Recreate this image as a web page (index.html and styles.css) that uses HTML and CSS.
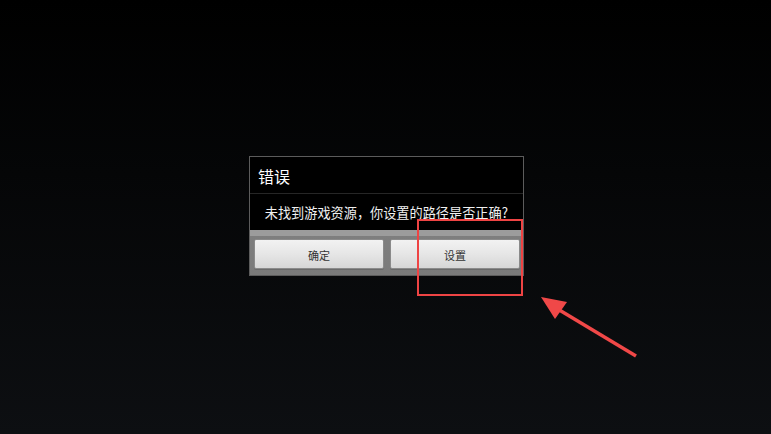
FILE: index.html
```html
<!DOCTYPE html>
<html lang="zh">
<head>
<meta charset="utf-8">
<link rel="stylesheet" href="styles.css">
</head>
<body>
<div class="screen">
  <div class="dialog">
    <div class="title">错误</div>
    <div class="message"><span class="msg-text">未找到游戏资源，你设置的路径是否正确?</span></div>
    <div class="buttons">
      <div class="btn">确定</div>
      <div class="btn">设置</div>
    </div>
  </div>
  <div class="highlight"></div>
  <svg class="arrow" width="771" height="434" viewBox="0 0 771 434">
    <line x1="636" y1="356" x2="556" y2="308" stroke="#f04848" stroke-width="3.5" stroke-linecap="butt"/>
    <polygon points="541,297 567,302 555,319" fill="#f04848"/>
  </svg>
</div>
</body>
</html>
```
FILE: styles.css
```css
html, body {
  margin: 0;
  padding: 0;
}
body {
  width: 771px;
  height: 434px;
  overflow: hidden;
  font-family: "Noto Sans CJK SC", "Noto Sans", sans-serif;
}
.screen {
  position: relative;
  width: 771px;
  height: 434px;
  box-sizing: border-box;
  padding: 156px 0 0 249px;
  background: linear-gradient(to bottom, #000000 0%, #050607 40%, #0d0f12 100%);
}
.dialog {
  width: 275px;
  box-sizing: border-box;
  border: 1px solid #5c5c5c;
  background: #000;
  display: flex;
  flex-direction: column;
}
.title {
  height: 37px;
  box-sizing: border-box;
  padding-left: 8px;
  padding-top: 2px;
  display: flex;
  align-items: center;
  color: #ffffff;
  font-size: 16px;
  border-bottom: 1px solid #262626;
}
.message {
  height: 36px;
  display: flex;
  align-items: center;
  justify-content: center;
  color: #f0f0f0;
  font-size: 14px;
  padding-bottom: 1px;
  box-sizing: border-box;
}
.msg-text {
  display: inline-block;
  transform: scaleX(0.94);
  white-space: nowrap;
}
.buttons {
  height: 45px;
  box-sizing: border-box;
  padding: 9px 3px 6px 4px;
  display: flex;
  gap: 6px;
  background: linear-gradient(to bottom, #9c9c9c 0px, #9c9c9c 6px, #7e7e7e 6px, #7a7a7a 100%);
}
.btn {
  flex: 1;
  height: 30px;
  box-sizing: border-box;
  padding-top: 1px;
  border: 1px solid #8a8a8a;
  border-radius: 2px;
  background: linear-gradient(to bottom, #f2f2f2 0%, #e6e6e6 50%, #d6d6d6 100%);
  box-shadow: 0 1px 0 #6a6a6a;
  display: flex;
  align-items: center;
  justify-content: center;
  color: #333;
  font-size: 11px;
}
.highlight {
  position: absolute;
  left: 417px;
  top: 219px;
  width: 106px;
  height: 77px;
  box-sizing: border-box;
  border: 2px solid #ee4444;
}
.arrow {
  position: absolute;
  left: 0;
  top: 0;
}
```
